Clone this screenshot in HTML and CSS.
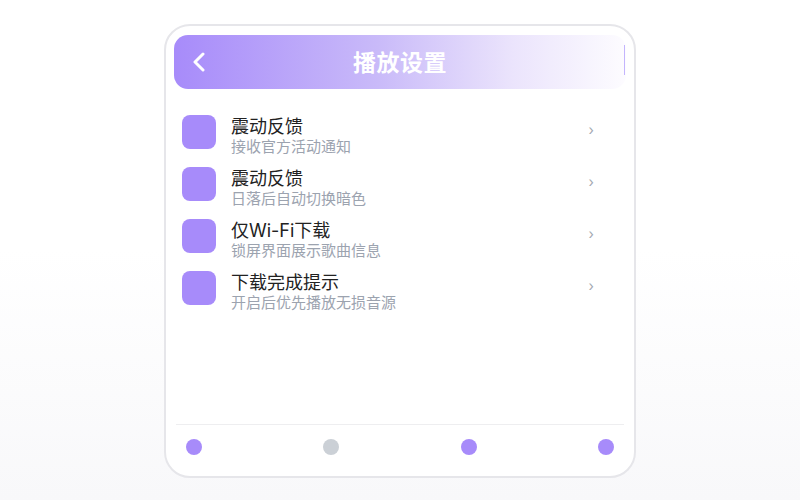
FILE: index.html
```html
<!DOCTYPE html>
<html lang="zh-CN">
<head>
    <meta charset="UTF-8">
    <meta name="viewport" content="width=device-width, initial-scale=1.0">
    <title>播放设置</title>
    <link rel="stylesheet" href="styles.css">
</head>
<body>

    <div class="phone">
        <!-- 顶部标题栏 -->
        <div class="header">
            <span class="back">
                <svg width="14" height="20" viewBox="0 0 14 20">
                    <path d="M11 2 L3 10 L11 18" fill="none" stroke="#fff" stroke-width="3" stroke-linecap="round" stroke-linejoin="round"/>
                </svg>
            </span>
            <h1 class="title">播放设置</h1>
        </div>

        <!-- 设置列表 -->
        <ul class="list">
            <li class="item">
                <div class="icon"></div>
                <div class="text">
                    <div class="name">震动反馈</div>
                    <div class="desc">接收官方活动通知</div>
                </div>
                <span class="arrow">›</span>
            </li>
            <li class="item">
                <div class="icon"></div>
                <div class="text">
                    <div class="name">震动反馈</div>
                    <div class="desc">日落后自动切换暗色</div>
                </div>
                <span class="arrow">›</span>
            </li>
            <li class="item">
                <div class="icon"></div>
                <div class="text">
                    <div class="name">仅Wi-Fi下载</div>
                    <div class="desc">锁屏界面展示歌曲信息</div>
                </div>
                <span class="arrow">›</span>
            </li>
            <li class="item">
                <div class="icon"></div>
                <div class="text">
                    <div class="name">下载完成提示</div>
                    <div class="desc">开启后优先播放无损音源</div>
                </div>
                <span class="arrow">›</span>
            </li>
        </ul>

        <!-- 底部导航 -->
        <div class="tabbar">
            <span class="dot"></span>
            <span class="dot off"></span>
            <span class="dot"></span>
            <span class="dot"></span>
        </div>
    </div>

</body>
</html>
```

FILE: styles.css
```css
/* Global */
body {
    margin: 0;
    height: 100vh;
    display: flex;
    justify-content: center;
    align-items: center;
    font-family: Inter, "Noto Sans CJK SC", sans-serif;
    background: linear-gradient(#fff 50%, #f8f8fa);
}

/* 手机外框 */
.phone {
    box-sizing: border-box;
    width: 472px;
    height: 454px;
    margin-top: 2px;
    border: 2px solid #e6e6ea;
    border-radius: 26px;
    background-color: #fff;
    padding: 9px 8px 0;
    display: flex;
    flex-direction: column;
}

.header {
    position: relative;
    height: 54px;
    border-radius: 14px;
    background: linear-gradient(90deg, #a78bfa, #c9baf9 45%, #ebe4fc 75%, #fdfcff);
    display: flex;
    align-items: center;
    justify-content: center;
}

.header::after {
    content: "";
    position: absolute;
    right: 1px;
    top: 10px;
    width: 1px;
    height: 30px;
    background-color: #c4b5fd;
}

.back {
    position: absolute;
    left: 18px;
    top: 17px;
    line-height: 0;
}

.title {
    margin: 0 0 3px;
    color: #fff;
    font-size: 23px;
    font-weight: 700;
    letter-spacing: 0.5px;
}

/* 列表 */
.list {
    list-style: none;
    margin: 0;
    padding: 26px 0 0 8px;
    flex: 1;
}

.item {
    display: flex;
    align-items: flex-start;
    height: 52px;
}

.icon {
    width: 34px;
    height: 34px;
    border-radius: 8px;
    background-color: #a78bfa;
    flex-shrink: 0;
}

.text {
    flex: 1;
    margin-left: 15px;
    padding-top: 1px;
}

.name {
    font-size: 18px;
    line-height: 22px;
    color: #222;
}

.desc {
    font-size: 15px;
    line-height: 17px;
    color: #9ca3af;
}

.arrow {
    margin: 6px 32px 0 0;
    font-size: 14px;
    color: #a3a8b0;
}

/* 底部导航 */
.tabbar {
    display: flex;
    justify-content: space-between;
    margin: 0 2px;
    padding: 14px 10px 21px;
    border-top: 1px solid #eeeef0;
}

.dot {
    width: 16px;
    height: 16px;
    border-radius: 50%;
    background-color: #a78bfa;
}

.dot.off {
    background-color: #cbd0d6;
}
```
